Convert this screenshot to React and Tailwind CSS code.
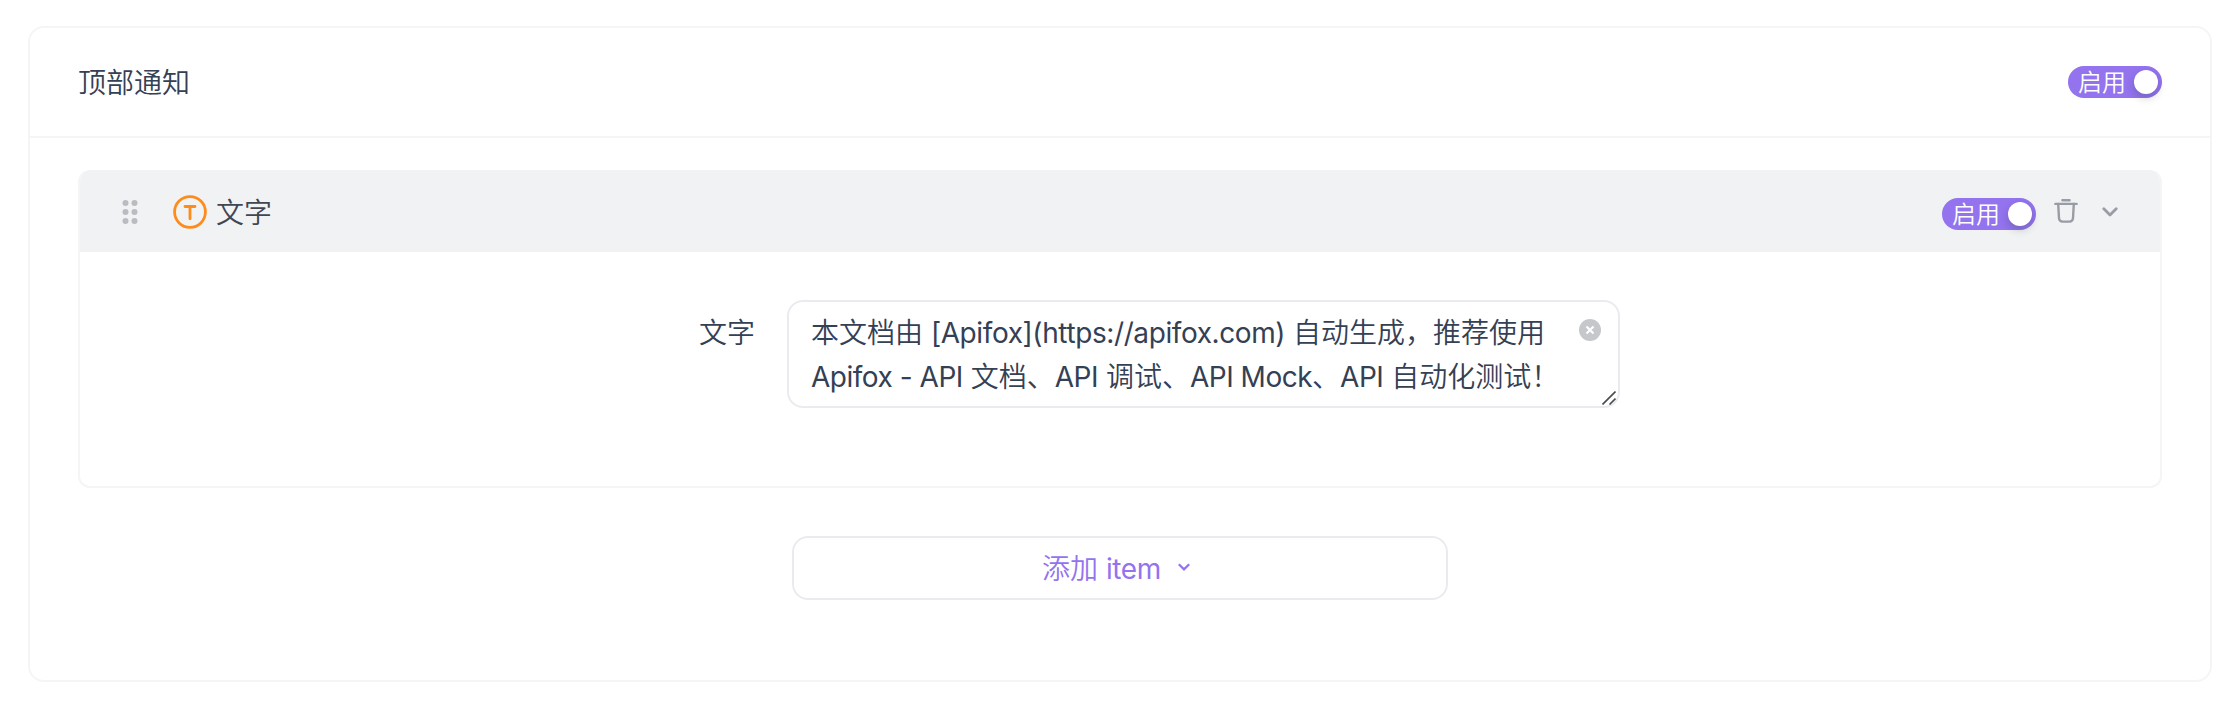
import { useState } from "react";

const DragIcon = () => (
  <svg width="16" height="24" viewBox="0 0 16 24" fill="#b9bcc1">
    {[3, 12].map((cx) =>
      [3, 12, 21].map((cy) => (
        <circle key={`${cx}-${cy}`} cx={cx + 0.5} cy={cy} r="3" />
      ))
    )}
  </svg>
);

const TextTypeIcon = () => (
  <svg
    width="34"
    height="34"
    viewBox="0 0 34 34"
    fill="none"
    stroke="#fd8c1c"
    strokeLinecap="round"
  >
    <circle cx="17" cy="17" r="15.4" strokeWidth="2.8" />
    <path d="M12 11.5h10M17 11.5v12.3" strokeWidth="2.8" />
  </svg>
);

const TrashIcon = () => (
  <svg
    width="24"
    height="24"
    viewBox="0 0 24 24"
    fill="none"
    stroke="#989ca4"
    strokeWidth="2.4"
    strokeLinecap="round"
    strokeLinejoin="round"
  >
    <path d="M8.4 1.3h7.2M1.4 4.9h21.2" />
    <path d="M4.2 5l.8 14.3a3.4 3.4 0 0 0 3.4 3.3h7.2a3.4 3.4 0 0 0 3.4-3.3L19.8 5" />
  </svg>
);

const Switch = ({ checked, onChange }) => (
  <button
    type="button"
    role="switch"
    aria-checked={checked}
    onClick={onChange}
    className="flex h-8 w-[94px] shrink-0 items-center justify-between rounded-full bg-[#9373ee] pl-2.5 pr-1 text-2xl leading-8 text-white"
  >
    <span className="pt-px">启用</span>
    <span className="size-6 rounded-full bg-white shadow-[0_4px_8px_rgba(0,35,11,0.2)]" />
  </button>
);

const App = () => {
  const [enabled, setEnabled] = useState(true);
  const [itemEnabled, setItemEnabled] = useState(true);

  return (
    <div className="h-[706px] bg-white pl-7 pr-[22px] pt-[26px] font-[Inter,'Noto_Sans_CJK_SC',sans-serif] text-[28px] font-[350] text-[#344054]">
      <div className="h-[656px] rounded-2xl border-2 border-[#f5f5f6]">
        <div className="flex h-[110px] items-center justify-between border-b-2 border-[#f5f5f6] px-12">
          <h2 className="pt-0.5 font-[350]">顶部通知</h2>
          <Switch checked={enabled} onChange={() => setEnabled(!enabled)} />
        </div>

        <div className="px-12 pt-8">
          <div className="h-[318px] overflow-hidden rounded-xl border-2 border-t-0 border-[#f5f5f6]">
            <div className="flex h-[82px] items-center bg-[#f1f2f4] pl-[42px] pr-[42px] pt-0.5 text-[#404653]">
              <DragIcon />
              <div className="ml-[35px] flex items-center gap-[9px]">
                <TextTypeIcon />
                <span className="pt-0.5">文字</span>
              </div>
              <div className="ml-auto flex items-center">
                <div className="mt-1">
                  <Switch
                    checked={itemEnabled}
                    onChange={() => setItemEnabled(!itemEnabled)}
                  />
                </div>
                <button type="button" className="-mt-0.5 ml-[18px]">
                  <TrashIcon />
                </button>
                <button type="button" className="ml-6">
                  <svg
                    width="16"
                    height="10"
                    viewBox="0 0 16 10"
                    fill="none"
                    stroke="#989ca4"
                    strokeWidth="2.8"
                    strokeLinecap="round"
                    strokeLinejoin="round"
                  >
                    <path d="M1.8 1.8L8 8l6.2-6.2" />
                  </svg>
                </button>
              </div>
            </div>

            <div className="flex pl-[619px] pt-12">
              <label className="w-[56px] pt-[11px] leading-[44px]">文字</label>
              <div className="relative ml-8 h-[108px] w-[833px] rounded-2xl border-2 border-[#eaebf0] px-[22px] pt-[9px] leading-[44px]">
                <p className="whitespace-nowrap">
                  本文档由{" "}
                  <span className="font-normal tracking-[-0.4px]">
                    [Apifox](https://apifox.com)
                  </span>{" "}
                  自动生成，推荐使用
                </p>
                <p className="whitespace-nowrap">
                  <span className="font-normal tracking-[-0.48px]">
                    Apifox - API
                  </span>{" "}
                  文档、
                  <span className="font-normal tracking-[-0.48px]">API</span>{" "}
                  调试、
                  <span className="font-normal tracking-[-0.48px]">
                    API Mock
                  </span>
                  、
                  <span className="font-normal tracking-[-0.48px]">API</span>{" "}
                  自动化测试！
                </p>
                <svg
                  className="absolute right-[17px] top-[17px]"
                  width="22"
                  height="22"
                  viewBox="0 0 22 22"
                >
                  <circle cx="11" cy="11" r="11" fill="#c5c7cb" />
                  <path
                    d="M7.5 7.5l7 7M14.5 7.5l-7 7"
                    stroke="#fff"
                    strokeWidth="2.2"
                  />
                </svg>
                <svg
                  className="absolute bottom-px right-0.5"
                  width="14"
                  height="14"
                  viewBox="0 0 14 14"
                  stroke="#484b4f"
                  strokeWidth="1.6"
                >
                  <path d="M0.5 13.5l13-13M7.5 13.5l6-6" />
                </svg>
              </div>
            </div>
          </div>

          <button
            type="button"
            className="mx-auto mt-12 flex h-16 w-[656px] items-center justify-center rounded-2xl border-2 border-[#eaebf0] pr-2 text-[#9373ee]"
          >
            <span className="pt-px">
              添加{" "}
              <span className="font-normal tracking-[-0.4px]">item</span>
            </span>
            <svg
              className="-mt-0.5 ml-[17px]"
              width="12"
              height="8"
              viewBox="0 0 12 8"
              fill="none"
              stroke="currentColor"
              strokeWidth="2.2"
            >
              <path d="M0.8 1.2L6 6.4l5.2-5.2" />
            </svg>
          </button>
        </div>
      </div>
    </div>
  );
};

export default App;
